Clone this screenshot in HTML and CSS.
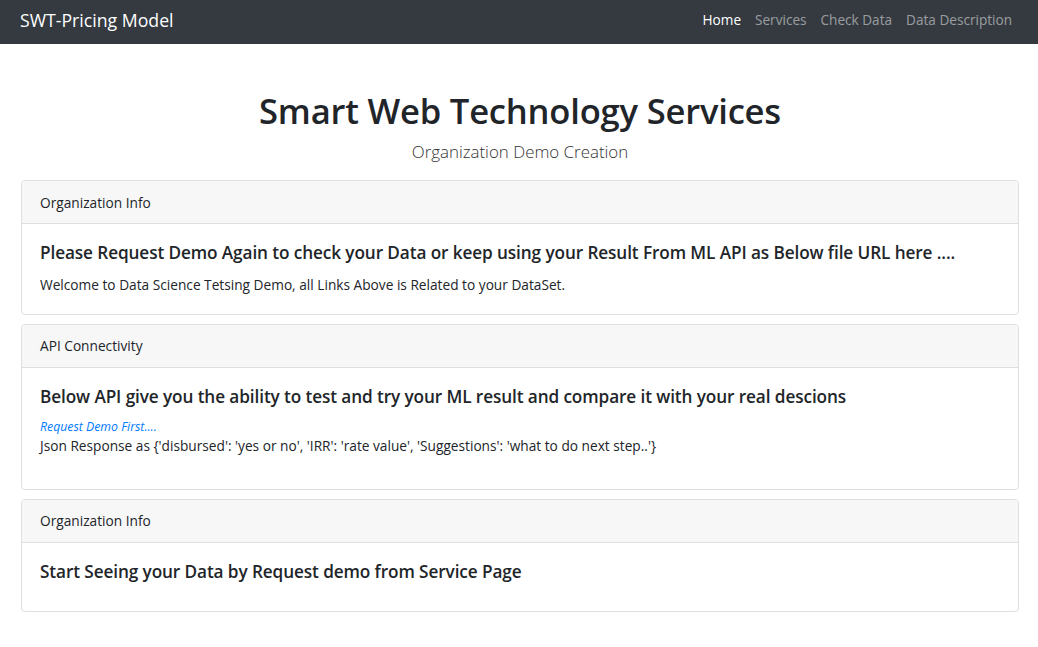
FILE: index.html
```html
<!DOCTYPE html>
<html lang="en">
<head>
<meta charset="utf-8">
<title>SWT-Pricing Model</title>
<link rel="stylesheet" href="styles.css">
</head>
<body>
<nav class="navbar">
  <a class="brand" href="#">SWT-Pricing Model</a>
  <ul class="nav">
    <li><a class="nav-link active" href="#">Home</a></li>
    <li><a class="nav-link" href="#">Services</a></li>
    <li><a class="nav-link" href="#">Check Data</a></li>
    <li><a class="nav-link" href="#">Data Description</a></li>
  </ul>
</nav>
<main class="container">
  <header class="hero">
    <h1 class="title">Smart Web Technology Services</h1>
    <p class="lead">Organization Demo Creation</p>
  </header>

  <section class="card">
    <div class="card-header">Organization Info</div>
    <div class="card-body">
      <h5 class="card-title">Please Request Demo Again to check your Data or keep using your Result From ML API as Below file URL here ....</h5>
      <p class="card-text last">Welcome to Data Science Tetsing Demo, all Links Above is Related to your DataSet.</p>
    </div>
  </section>

  <section class="card">
    <div class="card-header">API Connectivity</div>
    <div class="card-body">
      <h5 class="card-title">Below API give you the ability to test and try your ML result and compare it with your real descions</h5>
      <div class="small"><a class="demo-link" href="#">Request Demo First....</a></div>
      <p class="card-text">Json Response as {'disbursed': 'yes or no', 'IRR': 'rate value', 'Suggestions': 'what to do next step..'}</p>
    </div>
  </section>

  <section class="card">
    <div class="card-header">Organization Info</div>
    <div class="card-body">
      <h5 class="card-title">Start Seeing your Data by Request demo from Service Page</h5>
    </div>
  </section>
</main>
</body>
</html>
```
FILE: styles.css
```css
* { box-sizing: border-box; }
html, body { margin: 0; padding: 0; }
body {
  font-family: "Open Sans", "Noto Sans", sans-serif;
  font-size: 13.7px;
  line-height: 21.6px;
  color: #212529;
  background: #fff;
}
a { text-decoration: none; }

.navbar {
  height: 44px;
  background: #343a40;
  display: flex;
  align-items: center;
  justify-content: space-between;
  padding: 0 19px 0 20px;
}
.brand {
  color: #fff;
  font-size: 17.7px;
  line-height: 27px;
  margin-top: -4px;
}
.nav {
  list-style: none;
  margin: 0;
  padding: 0;
  display: flex;
  margin-top: -5px;
}
.nav-link {
  display: block;
  padding: 0 7px;
  font-size: 13.6px;
  line-height: 21.6px;
  color: rgba(255,255,255,.5);
}
.nav-link.active { color: #fff; }

.container { padding: 0 19px 0 21px; }

.hero { text-align: center; padding-top: 45px; }
.title {
  margin: 0 0 7px;
  font-size: 34.6px;
  line-height: 43px;
  font-weight: 600;
  letter-spacing: -0.2px;
}
.lead {
  margin: 0 0 15px;
  font-size: 16.9px;
  line-height: 26px;
  font-weight: 300;
  color: #333;
}

.card {
  border: 1px solid #dfdfdf;
  border-radius: 4px;
  margin-bottom: 8.6px;
  background: #fff;
  overflow: hidden;
}
.card-header {
  background: #f7f7f7;
  border-bottom: 1px solid #dfdfdf;
  padding: 10.5px 18px;
  line-height: 21px;
}
.card-body { padding: 18px; }
.card-title {
  margin: 0 0 10.8px;
  font-size: 17.2px;
  line-height: 21.6px;
  font-weight: 600;
  letter-spacing: -0.1px;
}
.card-text { margin: 0 0 14.4px; }
.card-text.last { margin-bottom: 0; }
.small { font-size: 11.5px; line-height: 17.3px; }
.demo-link { color: #007bff; font-style: italic; font-size: 12.3px; }
```
